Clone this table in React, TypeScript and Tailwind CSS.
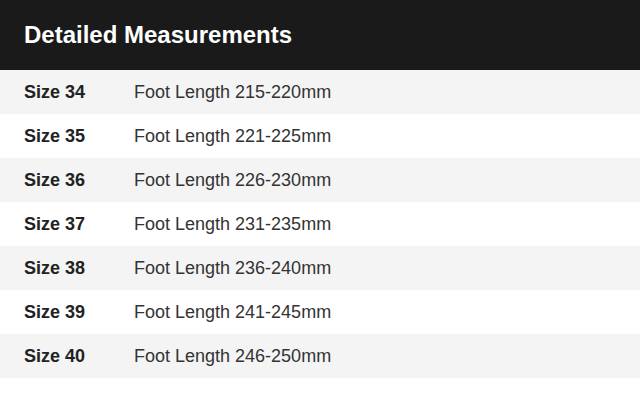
const rows = [
  { size: "Size 34", length: "Foot Length 215-220mm" },
  { size: "Size 35", length: "Foot Length 221-225mm" },
  { size: "Size 36", length: "Foot Length 226-230mm" },
  { size: "Size 37", length: "Foot Length 231-235mm" },
  { size: "Size 38", length: "Foot Length 236-240mm" },
  { size: "Size 39", length: "Foot Length 241-245mm" },
  { size: "Size 40", length: "Foot Length 246-250mm" },
];

export default function App() {
  return (
    <div className="h-[402px] w-[640px] bg-white font-['Liberation_Sans',Arial,sans-serif]">
      <div className="flex h-[70px] items-center bg-[#1a1a1a] px-6">
        <h2 className="text-[24px] font-bold text-white">Detailed Measurements</h2>
      </div>
      <div className="flex flex-col">
        {rows.map((row, i) => (
          <div
            key={row.size}
            className={`flex h-[44px] items-center px-6 text-[18px] ${i % 2 === 0 ? "bg-[#f4f4f4]" : "bg-white"}`}
          >
            <span className="w-[110px] font-bold text-[#222]">{row.size}</span>
            <span className="text-[#333]">{row.length}</span>
          </div>
        ))}
      </div>
    </div>
  );
}
